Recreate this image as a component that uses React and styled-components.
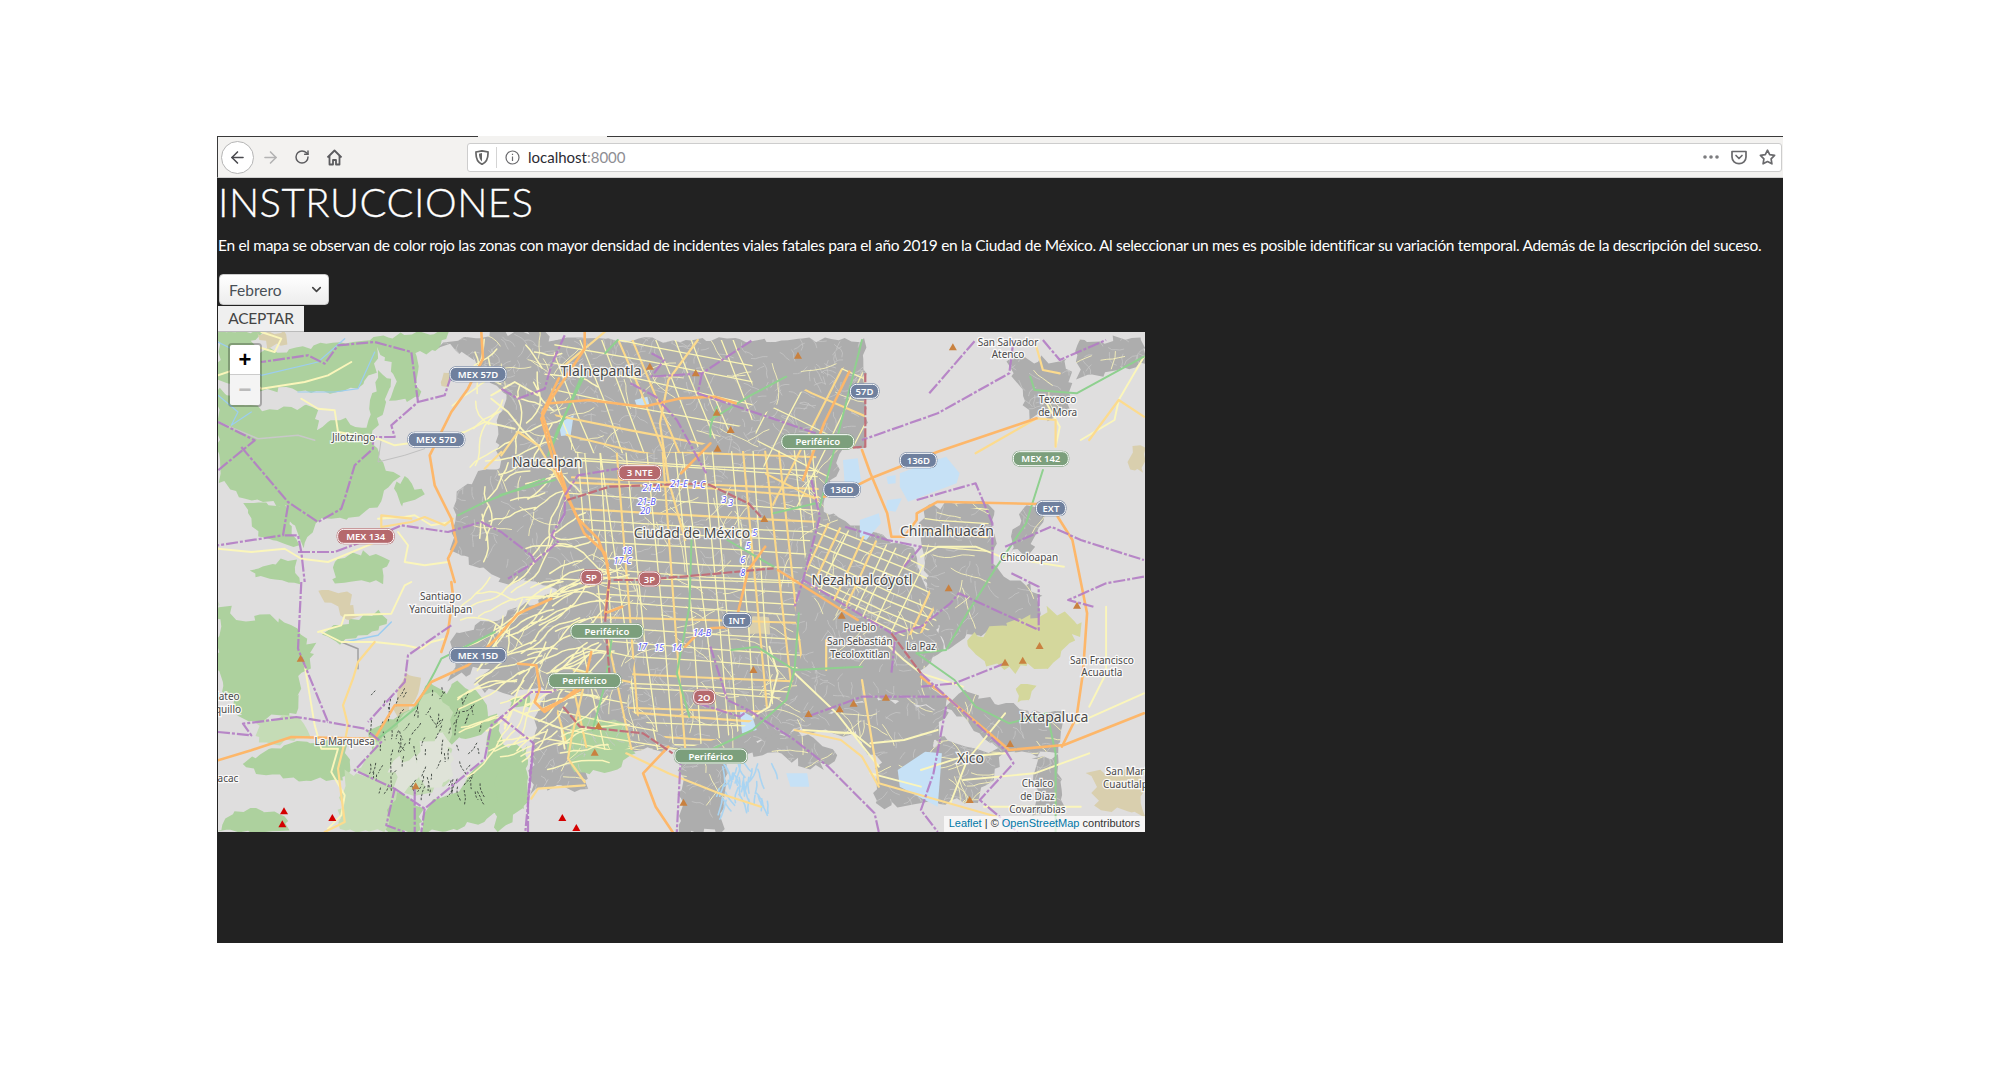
import React from "react";
import styled, { createGlobalStyle } from "styled-components";
import { ArrowLeft, ArrowRight, RotateCw, ChevronDown } from "lucide-react";

const GlobalStyle = createGlobalStyle`
  body {
    margin: 0;
    background: #fff;
    font-family: Lato, "Liberation Sans", sans-serif;
  }
`;

// the three crops the map was read from, each with its own scale
const toZ = (x, y) => [x / 2.376 + 282, y / 3 + 8];
const toA = (x, y) => [x / 3, y / 3];
const toB = (x, y) => [x / 3, y / 3 + 250];

const points = (f, s) =>
  s
    .trim()
    .split(/\s+/)
    .map((t) => {
      const [x, y] = t.split(",").map(Number);
      return f(x, y);
    });

const path = (f, s) => "M" + points(f, s).map(([x, y]) => x.toFixed(1) + " " + y.toFixed(1)).join("L");
const z = (s) => path(toZ, s);
const a = (s) => path(toA, s);
const b = (s) => path(toB, s);

function rng(seed) {
  let t = seed;
  return () => {
    t = (t + 0x6d2b79f5) | 0;
    let r = Math.imul(t ^ (t >>> 15), 1 | t);
    r = (r + Math.imul(r ^ (r >>> 7), 61 | r)) ^ r;
    return ((r ^ (r >>> 14)) >>> 0) / 4294967296;
  };
}

// polygon with a torn edge, so land use doesn't look cut with scissors
let roughSeed = 1;
function rough(f, s, amp = 6) {
  const pts = points(f, s);
  const r = rng(roughSeed++ * 97);
  let out = "";
  pts.forEach(([x, y], i) => {
    const [nx, ny] = pts[(i + 1) % pts.length];
    const n = Math.max(1, Math.ceil(Math.hypot(nx - x, ny - y) / 7));
    for (let k = 0; k < n; k++) {
      const px = x + ((nx - x) * k) / n + (r() - 0.5) * amp;
      const py = y + ((ny - y) * k) / n + (r() - 0.5) * amp;
      out += (out ? "L" : "M") + px.toFixed(1) + " " + py.toFixed(1);
    }
  });
  return out + "Z";
}
const ra = (s, amp) => rough(toA, s, amp);
const rb = (s, amp) => rough(toB, s, amp);
const rz = (s, amp) => rough(toZ, s, amp);

function wiggle(x, y, angle, step, steps, r, jitter = 0.5) {
  let out = `M${x.toFixed(1)} ${y.toFixed(1)}`;
  let cx = x;
  let cy = y;
  let an = angle;
  for (let i = 0; i < steps; i++) {
    an += (r() - 0.5) * jitter;
    cx += Math.cos(an) * step;
    cy += Math.sin(an) * step;
    out += `L${cx.toFixed(1)} ${cy.toFixed(1)}`;
  }
  return out;
}

function street(cx, cy, angle, len, off, r) {
  const c = Math.cos(angle);
  const s = Math.sin(angle);
  const mx = cx - s * off;
  const my = cy + c * off;
  const bend = (r() - 0.5) * 8;
  const x1 = mx - (c * len) / 2;
  const y1 = my - (s * len) / 2;
  const x2 = mx + (c * len) / 2;
  const y2 = my + (s * len) / 2;
  return `M${x1.toFixed(1)} ${y1.toFixed(1)}L${(mx - s * bend).toFixed(1)} ${(my + c * bend).toFixed(1)}L${x2.toFixed(1)} ${y2.toFixed(1)}`;
}

// a family of roughly parallel streets with uneven gaps, split in minor and major
function grid(cx, cy, angle, len, width, minGap, maxGap, majorShare, seed) {
  const r = rng(seed);
  let minor = "";
  let major = "";
  for (let off = -width / 2; off < width / 2; off += minGap + r() * (maxGap - minGap)) {
    const d = street(cx, cy, angle + (r() - 0.5) * 0.05, len, off, r);
    if (r() < majorShare) major += d;
    else minor += d;
  }
  return { minor, major };
}

const forest = [
  ra("0,0 130,0 100,30 120,60 240,50 330,30 470,20 600,0 690,0 660,60 590,60 520,85 480,50 470,120 420,170 300,180 210,170 130,180 0,140"),
  ra("0,170 120,230 290,225 300,290 360,260 450,290 460,210 480,110 520,140 490,250 460,310 490,400 540,430 470,530 380,555 300,570 250,640 200,520 80,500 0,445"),
  ra("500,60 590,60 605,200 520,210 530,130"),
  ra("80,510 200,520 240,640 120,620"),
  ra("360,680 440,660 510,680 490,750 340,750"),
  ra("100,710 230,680 250,750 110,735"),
  ra("520,470 570,430 610,490 550,520", 10),
  rb("0,60 60,110 190,110 290,190 260,280 220,400 80,420 20,320 0,260", 10),
  rb("320,150 400,110 490,90 510,130 440,165 370,180"),
  rb("220,480 380,470 400,560 370,600 120,580 80,540"),
  rb("0,750 40,690 130,680 210,710 210,750"),
  rb("450,450 580,380 640,300 700,360 720,440 830,400 870,500 900,490 920,560 930,660 830,700 700,750 610,750 620,680 720,620 800,530 820,430 700,480 660,560 540,620 480,560"),
  rb("440,560 540,620 610,680 600,750 510,750 470,620", 6),
  rb("690,320 720,300 790,340 820,430 760,470 700,450"),
  rb("880,350 940,335 930,380 880,380"),
  rb("1080,480 1140,450 1160,520 1110,540"),
  rz("570,990 610,950 640,1000 600,1030"),
  rz("70,500 130,480 150,520 90,560"),
  rz("-10,1300 60,1220 60,1400 -10,1476"),
];

const parks = [rz("150,1180 200,1130 300,1150 320,1240 260,1300 180,1290")];

const lightForest = [
  rb("120,420 240,400 280,470 120,490"),
  rb("380,570 480,590 530,630 500,750 360,750"),
  rb("520,440 640,320 700,380 690,600 610,640 530,620 410,565"),
];

const paleInner = [rb("620,470 680,450 700,490 690,590 620,620 600,540", 10), rb("520,540 590,520 600,620 530,630", 10)];

const water = [
  z("950,400 1030,362 1060,350 1092,400 1085,430 970,485 950,440"),
  z("815,360 850,355 860,440 820,450"),
  z("855,540 900,520 905,550 870,600 855,590"),
  z("920,480 955,475 940,515 915,510"),
  z("918,410 940,405 940,430 922,432"),
  z("140,250 175,225 168,285 145,288"),
  z("320,180 350,170 355,195 325,198"),
  z("570,1110 600,1130 610,1170 575,1180"),
  z("680,1300 730,1300 735,1340 690,1340"),
  z("945,1290 1010,1235 1050,1240 1040,1400 950,1340"),
];

const urban = [
  rz("130,0 868,0 868,320 815,330 765,510 990,635 1040,860 1050,930 1000,1000 1060,1075 1060,1110 900,1075 800,1110 700,1175 620,1200 560,1220 430,1230 340,1230 80,1230 90,1100 170,1000 150,900 140,760 100,700 40,640 60,520 0,400 -10,260 30,130 60,60"),
  ra("720,480 780,430 890,400 960,300 1010,270 1200,270 1200,750 870,750 760,700 700,640", 10),
  ra("670,40 800,0 1000,0 1030,90 1000,180 850,180 770,80", 10),
  rb("700,170 850,100 900,80 1100,0 1200,0 1200,330 1000,330 800,330 780,300 830,250 700,290", 10),
  rb("940,500 1100,490 1100,620 960,620 940,640", 8),
  rz("700,1175 800,1110 900,1075 1060,1110 1040,1190 1030,1390 890,1400 900,1260 840,1180", 8),
  rz("430,1220 620,1200 700,1175 800,1240 760,1290 640,1240 540,1260 530,1476 430,1476", 8),
  rz("1000,500 1165,490 1175,680 1280,760 1280,880 1130,880 1060,930 1040,860 1000,640", 8),
  rz("1060,1100 1100,1060 1250,1110 1335,1120 1335,1240 1200,1240", 8),
  rz("1040,1190 1200,1240 1130,1380 1030,1390", 8),
  rz("1215,60 1350,60 1350,230 1250,230", 10),
  rz("1370,0 1530,0 1530,80 1380,110", 10),
  rz("1270,1250 1330,1250 1340,1400 1270,1420", 8),
  rz("1240,500 1300,500 1260,640 1210,630", 8),
];

const tan = [
  ra("670,130 700,120 690,165 665,160"),
  ra("110,10 200,0 210,30 150,45"),
  rb("300,30 390,30 420,110 390,120 340,70"),
  rb("540,350 560,280 610,290 600,340 530,420"),
  rz("1400,1300 1530,1280 1530,1420 1420,1400", 10),
  rz("1500,320 1530,310 1530,400 1495,380"),
  rz("590,830 640,830 640,880 590,880", 2),
];

const volcano = [
  rz("1110,895 1200,860 1310,810 1370,840 1375,880 1310,980 1190,990 1130,950", 10),
  rz("1230,1040 1270,1040 1260,1090 1225,1085", 6),
];

const center = z("180,340 750,330 760,500 710,720 700,830 720,930 690,1050 560,1180 430,1230 300,1100 320,960 220,860 240,640 160,470");
const neza = z("760,540 1000,650 1010,690 1040,860 1000,880 950,890 720,730");
const chimal = z("1000,640 1010,520 1160,500 1170,650");
const north = z("600,240 860,50 870,320 810,330 750,500 650,510");
const northWest = z("130,0 600,0 600,240 440,340 180,340 120,200");
const southCity = z("300,1100 430,1230 230,1230 110,1200 170,1000 220,860 320,960");

const centerEW = grid(485, 300, 0.05, 420, 430, 6, 15, 0.3, 3);
const centerNS = grid(485, 300, 1.47, 420, 420, 7, 17, 0.3, 4);
const nezaA = grid(670, 270, 0.42, 240, 190, 8, 12, 0.25, 5);
const nezaB = grid(670, 270, 2.02, 220, 300, 11, 17, 0.3, 6);
const chimalA = grid(720, 190, 0.1, 100, 70, 12, 20, 0.2, 7);
const northA = grid(580, 90, 2.05, 260, 320, 16, 26, 0.25, 8);
const northB = grid(580, 90, 0.45, 220, 280, 24, 38, 0.5, 9);
const nwA = grid(420, 60, 1.2, 220, 300, 14, 26, 0.3, 10);
const nwB = grid(420, 60, 0.2, 300, 240, 16, 28, 0.3, 11);
const southA = grid(380, 400, 0.2, 240, 200, 12, 24, 0.3, 12);
const southB = grid(380, 400, 1.35, 240, 240, 18, 30, 0.3, 13);

// hill neighbourhoods west of the centre: long pale streets running up the valleys
function makeHills() {
  const r = rng(42);
  let d = "";
  for (let i = 0; i < 70; i++) {
    const x = 235 + r() * 110;
    const y = 255 + r() * 195;
    d += wiggle(x, y, -0.5 + (r() - 0.5) * 0.5, 7, 6 + Math.floor(r() * 7), r, 0.6);
  }
  for (let i = 0; i < 26; i++) {
    const x = 250 + r() * 90;
    const y = 90 + r() * 160;
    d += wiggle(x, y, -0.7 + (r() - 0.5) * 1.6, 7, 4 + Math.floor(r() * 7), r, 0.7);
  }
  for (let i = 0; i < 14; i++) {
    d += wiggle(250 + r() * 90, r() * 70, r() * 3, 7, 4 + Math.floor(r() * 5), r, 0.7);
  }
  return d;
}

// the small streets that make built-up land look speckled
function makeSpeckle() {
  const r = rng(77);
  let light = "";
  let paleStreets = "";
  for (let i = 0; i < 1900; i++) {
    light += wiggle(230 + r() * 700, r() * 500, r() * 6.28, 4, 2 + Math.floor(r() * 3), r, 1.2);
  }
  for (let i = 0; i < 280; i++) {
    paleStreets += wiggle(280 + r() * 640, r() * 500, r() * 6.28, 6, 3 + Math.floor(r() * 5), r, 0.6);
  }
  return { light, paleStreets };
}

// the canal quarter south of the centre
function makeCanals() {
  const r = rng(31);
  let d = "";
  for (let i = 0; i < 40; i++) {
    d += wiggle(500 + r() * 55, 430 + r() * 40, 1 + r(), 4, 2 + Math.floor(r() * 4), r, 0.5);
  }
  return d;
}

const hills = makeHills();
const speckle = makeSpeckle();
const canals = makeCanals();

const trunk = [
  z("1275,235 1040,335 890,410 850,435 770,470"),
  z("830,95 770,250 720,420"),
  z("860,330 880,400 920,520 930,590 960,590 990,540 990,520 1040,485 1280,492"),
  z("1325,530 1360,600 1395,820 1385,1000 1370,1130 1335,1220"),
  z("1530,1120 1340,1215 1210,1230 1060,1070 1000,1010"),
  z("660,690 850,840"),
  z("120,190 210,180 340,200 430,175 510,170 560,190"),
  z("140,115 100,220 130,340 165,480 200,580 250,640 260,720 250,820 290,800"),
  z("500,310 430,400"),
  z("590,690 565,820 560,840"),
  z("630,620 590,690"),
  z("400,1220 340,1300 370,1400 410,1476"),
  z("100,1110 150,1080 190,1050"),
  z("500,865 560,860"),
  z("440,920 470,880"),
  a("790,0 795,80 750,170 700,240 635,370 650,460 700,560 715,630 690,680 710,750"),
  a("1100,0 1100,50 1000,200 970,260 1010,400 1045,490 1080,560 1140,620 1170,700"),
  b("700,0 705,40 690,150 670,210"),
  b("0,535 100,505 220,465 470,470 530,370 590,370 640,300 750,250 830,175 900,95 1000,50"),
  b("900,245 955,250 965,320 950,360 980,390 1040,350 1100,300 1120,210"),
];

const primary = [
  a("1040,100 1160,0"),
  a("850,370 900,300 960,340 1050,490"),
  a("800,410 850,360"),
  a("580,560 490,550 490,585 580,570 620,555 680,580 705,560"),
  b("470,180 420,240 405,290 375,370 390,430 380,480 360,560 370,640 380,720 320,750"),
  b("1100,300 1060,470 1050,530 1100,600"),
  b("940,650 960,620 1100,610"),
  z("470,0 400,120 380,250 400,420 440,600"),
  z("860,1020 900,1330 1180,1430"),
  z("1270,0 1290,90 1330,100"),
  z("1130,340 1275,235 1320,240 1320,320"),
  z("1530,230 1470,180 1400,300"),
  z("775,900 775,990"),
  z("300,1240 400,1300 520,1360 620,1400"),
  z("700,1170 810,1200 860,1250 900,1340"),
];

const pale = [
  a("0,130 60,110 130,170 260,150 330,130 400,90"),
  a("250,200 300,230 350,235 360,300 480,320 530,340 600,330 740,300 800,270 890,290"),
  a("480,560 560,555 590,550 640,580 700,570"),
  a("540,600 570,640 560,690 620,700 690,690"),
  a("820,200 870,240 910,290 960,340"),
  a("820,190 890,150 960,190"),
  a("130,0 190,20 170,60 120,45"),
  a("0,650 100,660 200,650 250,680 330,690 450,640 500,620"),
  b("300,150 370,130 380,100 520,95 560,10 580,0"),
  b("310,150 370,180 470,180 560,190 610,200 640,180 680,170"),
  b("260,250 290,430 310,500 360,500 340,570 380,640 370,700 330,740"),
  b("860,440 880,380 950,410 1030,440 1040,500"),
  z("1000,650 1040,620 1130,620 1190,650 1340,680"),
  z("1530,50 1470,180 1460,240 1380,300"),
  z("1290,170 1330,260 1320,320"),
  z("1000,1290 1100,1250 1200,1240"),
  z("1070,1390 1110,1260 1200,1120"),
  z("880,1210 960,1200 1040,1170"),
  z("1370,1150 1530,1060"),
  z("1100,1040 1000,1000 960,960 900,890"),
  z("700,1000 800,1120 900,1280"),
  z("640,920 660,1000 640,1100 600,1130"),
  z("1440,800 1440,1000 1400,1100"),
  z("1100,1320 1270,1300 1400,1240"),
  z("720,1170 840,1180 880,1220"),
  z("880,1300 1000,1340"),
  z("1150,1400 1380,1400"),
];

const motorway = [
  z("860,0 800,300 760,500"),
  z("0,465 130,420"),
  z("280,0 250,40"),
  z("200,90 160,210 120,330"),
  z("515,200 500,260 500,290"),
  z("500,240 590,170 680,110"),
  z("1530,50 1370,160 1270,150 1260,110"),
  z("1290,390 1250,550 1180,680 1110,820 1060,930 990,940"),
  z("455,600 450,800 420,1000 450,1130"),
  z("540,600 650,680"),
  z("550,930 610,920 700,990 860,980"),
  z("710,820 700,990 680,1080 600,1170 500,1230"),
  z("990,940 1080,1020 1130,1100 1210,1150 1300,1120 1320,1240 1320,1476"),
  z("270,860 250,1030 220,1170"),
  z("750,490 650,520"),
  a("1100,130 1020,290 990,370"),
  a("720,550 800,510 980,440"),
  b("480,470 590,380 650,270 670,230 830,150"),
];

const border = [
  a("0,270 110,325 0,415"),
  a("70,345 210,510 300,570 370,530 380,500 410,400 465,350 465,315 530,315 520,280 600,210 680,190 700,130"),
  a("210,520 195,610 0,640"),
  a("600,210 580,60 470,30 360,40 320,95 270,70 130,90"),
  a("240,660 350,660 470,615 550,580 690,600 790,570 850,600 940,670 950,690 870,740"),
  a("1040,545 1000,610 1020,630 950,690"),
  a("1040,545 1040,490 1080,430 1200,410"),
  a("200,610 240,610 250,660 260,750"),
  a("850,170 900,200 980,170 1000,100 1040,10"),
  b("250,0 240,200 330,420 440,440 490,480 410,565 530,620 505,730 560,750"),
  b("0,450 100,460 75,425 235,405 330,420"),
  b("530,620 620,680 800,530 820,430 940,330 1000,330 1080,280"),
  b("700,130 570,220 560,300 450,420"),
  b("590,620 590,750"),
  b("620,680 610,750"),
  b("945,490 930,650 930,750"),
  z("310,130 370,170 420,240 490,400"),
  z("480,100 470,160 600,215 750,280"),
  z("740,420 760,530 720,720 700,800"),
  z("820,560 920,600 1000,620 960,680"),
  z("720,720 930,880"),
  z("1000,1000 1200,1230 1220,1270 1140,1380 1230,1476"),
  z("1060,1100 1030,1300 1000,1410 1040,1476"),
  z("1220,0 1210,100 1040,220 860,300"),
  z("990,480 1130,430 1170,550 1170,690"),
  z("1215,700 1280,740 1280,870 1090,760 1070,790 1000,860 940,880 930,1000"),
  z("1200,620 1310,560 1380,600 1530,660"),
  z("1530,710 1440,730 1350,780 1410,800"),
  z("590,1110 700,1200 780,1280 890,1420 900,1476"),
  z("0,1130 80,1210 60,1476"),
  z("730,1130 860,1070 1060,1070"),
  z("1200,970 1080,1030 1000,1040"),
  z("470,1090 570,1130 590,1110"),
  z("360,40 390,60 360,110 480,100 600,0"),
  z("1020,160 1130,0"),
  z("1290,0 1330,60 1440,0"),
  z("500,920 540,1080 590,1110"),
  z("430,1240 420,1476"),
];

const redBorder = [
  z("160,480 260,440 490,430 590,490 620,530"),
  z("270,720 330,720 480,705 650,685"),
  z("260,720 250,840 260,1000"),
  z("150,1100 190,1160 340,1180 410,1240"),
  z("930,880 1000,1000"),
  z("868,100 868,320 815,325"),
];

// path tracks in the national park south of the city
function makeTracks() {
  const r = rng(9);
  let d = "";
  for (let i = 0; i < 90; i++) {
    d += wiggle(150 + r() * 115, 355 + r() * 105, 1.2 + r(), 3, 2 + Math.floor(r() * 4), r, 0.6);
  }
  return d;
}
const tracks = makeTracks();

const brown = [
  [356, 80], [465, 100], [515, 218], [548, 270], [517, 326], [628, 537], [708, 47], [1076, 22],
  [1066, 745], [1371, 797], [812, 827], [602, 990], [1282, 918], [1242, 962], [1200, 968],
  [917, 1073], [840, 1091], [807, 1108], [733, 1122], [234, 1158], [225, 1238], [436, 1388],
  [1212, 1212], [1116, 1380],
].map(([x, y]) => toZ(x, y));
brown.push(toB(248, 230), toB(593, 613));

const red = [[198, 688], [193, 727], [343, 708], [1033, 708], [1075, 738]].map(([x, y]) => toB(x, y));

const shields = [
  { at: toA(780, 127), w: 58, t: "MEX 57D", c: "blue" },
  { at: toA(655, 323), w: 58, t: "MEX 57D", c: "blue" },
  { at: toA(443, 613), w: 58, t: "MEX 134", c: "red" },
  { at: toB(780, 220), w: 58, t: "MEX 15D", c: "blue" },
  { at: toZ(866, 154), w: 30, t: "57D", c: "blue" },
  { at: toZ(755, 305), w: 74, t: "Periférico", c: "green" },
  { at: toZ(994, 361), w: 38, t: "136D", c: "blue" },
  { at: toZ(812, 449), w: 38, t: "136D", c: "blue" },
  { at: toZ(1285, 356), w: 57, t: "MEX 142", c: "green" },
  { at: toZ(332, 398), w: 44, t: "3 NTE", c: "red" },
  { at: toZ(1309, 505), w: 31, t: "EXT", c: "blue" },
  { at: toZ(217, 712), w: 23, t: "5P", c: "red" },
  { at: toZ(355, 717), w: 23, t: "3P", c: "red" },
  { at: toZ(563, 841), w: 30, t: "INT", c: "blue" },
  { at: toZ(254, 874), w: 74, t: "Periférico", c: "green" },
  { at: toZ(201, 1022), w: 74, t: "Periférico", c: "green" },
  { at: toZ(485, 1071), w: 23, t: "2O", c: "red" },
  { at: toZ(501, 1248), w: 74, t: "Periférico", c: "green" },
];

const shieldColors = { blue: "#6f809e", red: "#b5696d", green: "#7c9f7c" };

const exits = [
  ["21-A", 360, 441], ["21-E", 425, 430], ["1-C", 472, 432], ["3", 532, 479], ["3", 548, 487],
  ["21-B", 348, 485], ["20", 345, 511], ["5", 605, 578], ["5", 590, 617], ["6", 577, 657],
  ["8", 577, 697], ["18", 302, 631], ["17-C", 291, 660], ["14-B", 480, 878], ["17", 338, 918],
  ["15", 378, 921], ["14", 420, 923],
];

const labels = [
  { t: "Tlalnepantla", at: toZ(240, 92), s: 14 },
  { t: "Naucalpan", at: toZ(112, 363), s: 14 },
  { t: "Ciudad de México", at: toZ(456, 576), s: 14 },
  { t: "Nezahualcóyotl", at: toZ(860, 717), s: 14 },
  { t: "Chimalhuacán", at: toZ(1062, 570), s: 14 },
  { t: "Ixtapaluca", at: toZ(1317, 1129), s: 14 },
  { t: "Xico", at: toZ(1118, 1253), s: 14 },
  { t: "Chicoloapan", at: toZ(1257, 651), s: 10 },
  { t: "Pueblo", at: toZ(855, 862), s: 10 },
  { t: "San Sebastián", at: toZ(855, 902), s: 10 },
  { t: "Tecoloxtitlan", at: toZ(855, 941), s: 10 },
  { t: "La Paz", at: toZ(1000, 918), s: 10 },
  { t: "San Francisco", at: toZ(1430, 959), s: 10 },
  { t: "Acuautla", at: toZ(1430, 997), s: 10 },
  { t: "Chalco", at: toZ(1277, 1330), s: 10 },
  { t: "de Díaz", at: toZ(1277, 1368), s: 10 },
  { t: "Covarrubias", at: toZ(1277, 1407), s: 10 },
  { t: "San Martín", at: toZ(1500, 1293), s: 10 },
  { t: "Cuautlalpan", at: toZ(1500, 1332), s: 10 },
  { t: "Texcoco", at: toZ(1325, 178), s: 10 },
  { t: "de Mora", at: toZ(1325, 215), s: 10 },
  { t: "San Salvador", at: toZ(1207, 5), s: 10 },
  { t: "Atenco", at: toZ(1207, 41), s: 10 },
  { t: "Jilotzingo", at: toA(407, 315), s: 10 },
  { t: "Santiago", at: toB(668, 42), s: 10 },
  { t: "Yancuitlalpan", at: toB(668, 80), s: 10 },
  { t: "La Marquesa", at: toB(380, 477), s: 10 },
  { t: "Mateo", at: toB(20, 343), s: 10 },
  { t: "quillo", at: toB(30, 382), s: 10 },
  { t: "acac", at: toB(30, 587), s: 10 },
];

const Page = styled.div`
  padding: 136px 0 137px 217px;
`;

const Browser = styled.div`
  position: relative;
  width: 1566px;
  height: 807px;
  display: flex;
  flex-direction: column;
`;

const Toolbar = styled.div`
  height: 42px;
  flex: none;
  box-sizing: border-box;
  display: flex;
  align-items: center;
  background: #f3f2f0;
  border-top: 1px solid #3a3a3a;
  border-left: 1px solid #3a3a3a;
  border-bottom: 1px solid #cfcfcf;
  padding-left: 3px;
`;

const TabGap = styled.div`
  position: absolute;
  left: 261px;
  top: 0;
  width: 129px;
  height: 1px;
  background: #f3f2f0;
`;

const BackButton = styled.button`
  width: 33px;
  height: 33px;
  padding: 0;
  border-radius: 50%;
  background: #fff;
  border: 1px solid #b5b5b5;
  color: #4a4a4f;
  display: flex;
  align-items: center;
  justify-content: center;
`;

const NavIcon = styled.div`
  width: 32px;
  display: flex;
  justify-content: center;
  color: ${(p) => (p.$off ? "#b3b3b3" : "#5c5c5f")};
`;

const UrlBar = styled.div`
  margin-left: 117px;
  width: 1315px;
  height: 29px;
  box-sizing: border-box;
  display: flex;
  align-items: center;
  background: #fff;
  border: 1px solid #cdcdcd;
  border-radius: 3px;
  color: #6a6a6d;
`;

const ShieldSlot = styled.div`
  width: 29px;
  height: 21px;
  display: flex;
  align-items: center;
  justify-content: center;
  border-right: 1px solid #d4d4d4;
  box-sizing: border-box;
`;

const InfoSlot = styled.div`
  width: 31px;
  display: flex;
  justify-content: center;
`;

const Host = styled.div`
  flex: 1;
  font-family: Lato, "Liberation Sans", sans-serif;
  font-size: 15px;
  color: #2b2b33;
  span {
    color: #8e8e93;
  }
`;

const PageAction = styled.div`
  width: 28px;
  display: flex;
  justify-content: center;
`;

const Content = styled.div`
  flex: 1;
  background: #222;
  color: #fff;
  border-left: 1px solid #222;
`;

const Title = styled.h1`
  margin: 0 0 7px;
  font-size: 40px;
  line-height: 48px;
  font-weight: 300;
  letter-spacing: 0.5px;
  font-family: Lato, sans-serif;
  -webkit-text-stroke: 0.3px #fff;
`;

const Intro = styled.p`
  margin: 0 0 17px;
  font-size: 15.5px;
  letter-spacing: -0.325px;
  line-height: 24px;
  white-space: nowrap;
`;

const SelectWrap = styled.div`
  position: relative;
  width: 110px;
  height: 31px;
  margin: 0 0 1px 1px;
  color: #444;
  svg {
    position: absolute;
    right: 5px;
    top: 8px;
    pointer-events: none;
  }
`;

const MonthSelect = styled.select`
  appearance: none;
  width: 100%;
  height: 100%;
  padding: 0 0 0 9px;
  border: 1px solid #ccc;
  border-radius: 4px;
  background: linear-gradient(#fff, #ededed);
  color: #495057;
  font: 15.5px Lato, sans-serif;
`;

const Accept = styled.button`
  display: block;
  height: 26px;
  width: 86px;
  padding: 0 0 2px;
  border: 0;
  border-bottom: 1px solid #bbb;
  background: #efefef;
  color: #444;
  font: 15.5px Lato, sans-serif;
  letter-spacing: -0.2px;
`;

const MapBox = styled.div`
  position: relative;
  width: 927px;
  height: 500px;
  overflow: hidden;
  background: #dfdede;
`;

const MapSvg = styled.svg`
  display: block;
`;

const Line = styled.path`
  fill: none;
  stroke: ${(p) => p.$c};
  stroke-width: ${(p) => p.$w};
  stroke-linejoin: round;
  stroke-linecap: round;
  ${(p) => p.$dash && `stroke-dasharray: ${p.$dash}; stroke-linecap: butt;`}
  ${(p) => p.$o && `opacity: ${p.$o};`}
`;

const Area = styled.path`
  fill: ${(p) => p.$c};
`;

const PlaceLabel = styled.text`
  font-family: "Noto Sans", sans-serif;
  font-size: ${(p) => p.$s}px;
  fill: #4a4a4a;
  stroke: rgba(255, 255, 255, 0.85);
  stroke-width: 2.5px;
  paint-order: stroke;
  text-anchor: middle;
  dominant-baseline: central;
`;

const ExitLabel = styled.text`
  font-family: "Noto Sans", sans-serif;
  font-size: 9px;
  font-style: italic;
  fill: #5a5af0;
  stroke: #fff;
  stroke-width: 2px;
  paint-order: stroke;
  text-anchor: middle;
  dominant-baseline: central;
`;

const ShieldText = styled.text`
  font-family: "Noto Sans", sans-serif;
  font-size: 9.5px;
  font-weight: 600;
  fill: #fff;
  text-anchor: middle;
  dominant-baseline: central;
`;

const ZoomControl = styled.div`
  position: absolute;
  left: 10px;
  top: 11px;
  width: 30px;
  border: 2px solid rgba(0, 0, 0, 0.25);
  border-radius: 4px;
`;

const ZoomButton = styled.div`
  height: 30px;
  display: flex;
  align-items: center;
  justify-content: center;
  font: bold 22px "Liberation Sans", sans-serif;
  background: ${(p) => (p.$off ? "#f4f4f4" : "#fff")};
  color: ${(p) => (p.$off ? "#bbb" : "#000")};
  border-radius: ${(p) => (p.$off ? "0 0 2px 2px" : "2px 2px 0 0")};
  border-bottom: ${(p) => (p.$off ? "0" : "1px solid #ccc")};
  box-sizing: border-box;
`;

const Attribution = styled.div`
  position: absolute;
  right: 0;
  bottom: 0;
  padding: 0 5px;
  height: 16px;
  background: rgba(255, 255, 255, 0.7);
  color: #333;
  font: 11px/15px "Liberation Sans", sans-serif;
  a {
    color: #0078a8;
    text-decoration: none;
  }
`;

function Triangle({ at, c, size = 4 }) {
  const [x, y] = at;
  return <polygon points={`${x},${y - size} ${x + size},${y + size - 1} ${x - size},${y + size - 1}`} fill={c} />;
}

function Shield({ at, w, t, c }) {
  const [x, y] = at;
  const h = 16;
  return (
    <g>
      <rect x={x - w / 2} y={y - h / 2} width={w} height={h} rx="7" fill={shieldColors[c]} />
      <rect x={x - w / 2 + 1} y={y - h / 2 + 1} width={w - 2} height={h - 2} rx="6" fill={shieldColors[c]} stroke="#fff" strokeWidth="1" />
      <ShieldText x={x} y={y}>{t}</ShieldText>
    </g>
  );
}

function StreetSet({ set, w = 1.3 }) {
  return (
    <>
      <Line d={set.minor} $c="#fbf5b4" $w={w} />
      <Line d={set.major} $c="#fcd98a" $w={w + 0.8} />
    </>
  );
}

function CityMap() {
  return (
    <MapSvg width="927" height="500" viewBox="0 0 927 500">
      <defs>
        <clipPath id="center"><path d={center} /></clipPath>
        <clipPath id="neza"><path d={neza} /></clipPath>
        <clipPath id="chimal"><path d={chimal} /></clipPath>
        <clipPath id="north"><path d={north} /></clipPath>
        <clipPath id="northwest"><path d={northWest} /></clipPath>
        <clipPath id="southcity"><path d={southCity} /></clipPath>
        <clipPath id="urban">{urban.map((d, i) => <path key={i} d={d} />)}</clipPath>
      </defs>
      {forest.map((d, i) => <Area key={i} d={d} $c="#add19e" />)}
      {lightForest.map((d, i) => <Area key={i} d={d} $c="#c5dcb6" />)}
      {paleInner.map((d, i) => <Area key={i} d={d} $c="#dfe3d8" />)}
      {urban.map((d, i) => <Area key={i} d={d} $c="#adadad" />)}
      {parks.map((d, i) => <Area key={i} d={d} $c="#add19e" />)}
      <g clipPath="url(#urban)">
        <Line d={speckle.light} $c="#c9c9c9" $w="0.7" />
        <Line d={speckle.paleStreets} $c="#fbf6bb" $w="1" $o="0.85" />
      </g>
      {tan.map((d, i) => <Area key={i} d={d} $c="#d9cfae" />)}
      {volcano.map((d, i) => <Area key={i} d={d} $c="#d4d79c" />)}
      {water.map((d, i) => <Area key={i} d={d} $c="#c6e1f6" />)}
      <Line d={canals} $c="#a9d4f2" $w="1.6" />
      <Line d={a("0,190 60,240 40,280 100,240")} $c="#9ccdf0" $w="1.2" />
      <Line d={a("240,180 350,180 420,170 470,60")} $c="#9ccdf0" $w="1.2" />
      <Line d={a("0,30 60,60 130,130 300,90 380,20")} $c="#9ccdf0" $w="1.2" />
      <Line d={b("380,180 480,160 520,120")} $c="#9ccdf0" $w="1.5" />
      <Line d={a("0,270 120,320 240,310 290,325")} $c="#c8c8c8" $w="1.5" />
      <Line d={a("490,320 480,390 560,370 620,350")} $c="#c0c0c0" $w="1" />
      <Line d={b("370,180 420,200 420,260")} $c="#a0a0a0" $w="1.5" />
      <Line d={tracks} $c="#38403a" $w="0.9" $dash="2.5 1.5" />
      <g clipPath="url(#center)">
        <StreetSet set={centerEW} />
        <StreetSet set={centerNS} />
      </g>
      <g clipPath="url(#neza)">
        <StreetSet set={nezaA} w={1.4} />
        <StreetSet set={nezaB} w={1.4} />
      </g>
      <g clipPath="url(#chimal)">
        <StreetSet set={chimalA} />
      </g>
      <g clipPath="url(#north)">
        <StreetSet set={northA} />
        <StreetSet set={northB} />
      </g>
      <g clipPath="url(#northwest)">
        <StreetSet set={nwA} />
        <StreetSet set={nwB} />
      </g>
      <g clipPath="url(#southcity)">
        <StreetSet set={southA} />
        <StreetSet set={southB} />
      </g>
      <Line d={hills} $c="#fbf6bb" $w="1.5" />
      {pale.map((d, i) => <Line key={i} d={d} $c="#fbf6bb" $w="1.9" />)}
      {primary.map((d, i) => <Line key={i} d={d} $c="#fcdb8e" $w="2.2" />)}
      {motorway.map((d, i) => <Line key={i} d={d} $c="#8fd08f" $w="2" />)}
      {trunk.map((d, i) => <Line key={i} d={d} $c="#fdb76a" $w="2.6" />)}
      {border.map((d, i) => <Line key={i} d={d} $c="#b27cc4" $w="2.2" $dash="12 2 3 2" $o="0.9" />)}
      {redBorder.map((d, i) => <Line key={i} d={d} $c="#c0707a" $w="2.2" $dash="9 2" />)}
      {brown.map((at, i) => <Triangle key={i} at={at} c="#c9813f" />)}
      {red.map((at, i) => <Triangle key={i} at={at} c="#d40000" />)}
      {labels.map((l) => <PlaceLabel key={l.t} x={l.at[0]} y={l.at[1]} $s={l.s}>{l.t}</PlaceLabel>)}
      {exits.map(([t, x, y]) => {
        const [px, py] = toZ(x, y);
        return <ExitLabel key={t + x} x={px} y={py}>{t}</ExitLabel>;
      })}
      {shields.map((s, i) => <Shield key={i} {...s} />)}
    </MapSvg>
  );
}

export default function App() {
  return (
    <Page>
      <GlobalStyle />
      <Browser>
        <TabGap />
        <Toolbar>
          <BackButton aria-label="back">
            <ArrowLeft size={19} strokeWidth={2} />
          </BackButton>
          <NavIcon $off>
            <ArrowRight size={19} strokeWidth={2} />
          </NavIcon>
          <NavIcon>
            <RotateCw size={16} strokeWidth={2.2} />
          </NavIcon>
          <NavIcon>
            <svg width="17" height="17" viewBox="0 0 17 17" fill="none" stroke="#5c5c5f" strokeWidth="1.8" strokeLinejoin="round">
              <path d="M1.5 8.5 8.5 1.5l7 7" />
              <path d="M3.5 7v8.5H7V11h3v4.5h3.500V7" />
            </svg>
          </NavIcon>
          <UrlBar>
            <ShieldSlot>
              <svg width="14" height="15" viewBox="0 0 14 15">
                <path d="M1 2 7 .8 13 2c.3 6-1.600 10.500-6 12.300C2.600 12.500.7 8 1 2Z" fill="none" stroke="#666" strokeWidth="1.7" />
                <path d="M7 3v8.500C4.800 10 4 7 4 3.800Z" fill="#666" />
              </svg>
            </ShieldSlot>
            <InfoSlot>
              <svg width="15" height="15" viewBox="0 0 15 15" fill="none" stroke="#6a6a6d" strokeWidth="1.2">
                <circle cx="7.5" cy="7.5" r="6.5" />
                <path d="M7.5 6.500v4.500M7.500 3.800v1.300" />
              </svg>
            </InfoSlot>
            <Host>
              localhost<span>:8000</span>
            </Host>
            <PageAction>
              <svg width="16" height="4" viewBox="0 0 16 4" fill="#7c7c7f">
                <circle cx="2" cy="2" r="1.8" />
                <circle cx="8" cy="2" r="1.8" />
                <circle cx="14" cy="2" r="1.8" />
              </svg>
            </PageAction>
            <PageAction>
              <svg width="16" height="15" viewBox="0 0 16 15" fill="none" stroke="#6a6a6d" strokeWidth="1.7" strokeLinecap="round" strokeLinejoin="round">
                <path d="M1 1.500h14v5.500c0 3.800-3.200 6.700-7 6.700s-7-2.900-7-6.700Z" />
                <path d="M5 5.500 8 8.500l3-3" />
              </svg>
            </PageAction>
            <PageAction>
              <svg width="17" height="16" viewBox="0 0 17 16" fill="none" stroke="#6a6a6d" strokeWidth="1.7" strokeLinejoin="round">
                <path d="M8.500 1.200l2.200 4.500 4.900.7-3.500 3.500.8 4.900-4.400-2.300-4.400 2.300.8-4.900L1.400 6.400l4.900-.7Z" />
              </svg>
            </PageAction>
          </UrlBar>
        </Toolbar>
        <Content>
          <Title>INSTRUCCIONES</Title>
          <Intro>
            En el mapa se observan de color rojo las zonas con mayor densidad de incidentes viales fatales para el año 2019 en la Ciudad de México. Al seleccionar un mes es posible identificar su variación temporal. Además de la descripción del suceso.
          </Intro>
          <SelectWrap>
            <MonthSelect defaultValue="Febrero">
              <option>Enero</option>
              <option>Febrero</option>
              <option>Marzo</option>
            </MonthSelect>
            <ChevronDown size={15} strokeWidth={2.6} />
          </SelectWrap>
          <Accept>ACEPTAR</Accept>
          <MapBox>
            <CityMap />
            <ZoomControl>
              <ZoomButton>+</ZoomButton>
              <ZoomButton $off>−</ZoomButton>
            </ZoomControl>
            <Attribution>
              <a href="#leaflet">Leaflet</a> | © <a href="#osm">OpenStreetMap</a> contributors
            </Attribution>
          </MapBox>
        </Content>
      </Browser>
    </Page>
  );
}
